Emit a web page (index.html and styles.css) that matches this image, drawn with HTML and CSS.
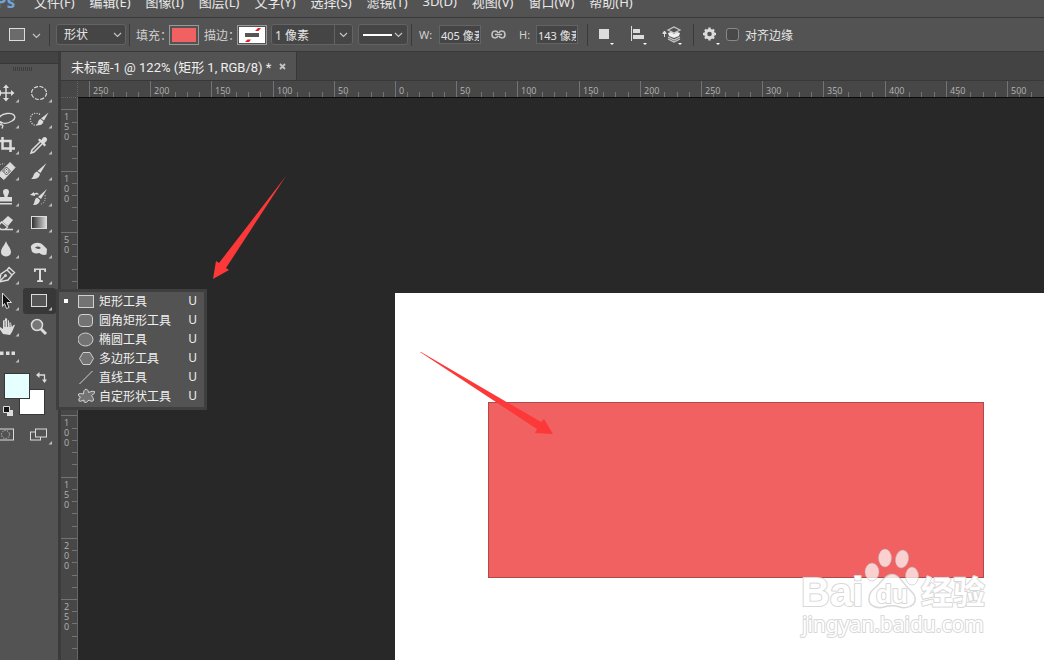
FILE: index.html
```html
<!DOCTYPE html>
<html lang="zh-CN">
  <head>
    <meta charset="utf-8">
    <title>未标题-1</title>
    <link rel="stylesheet" href="styles.css">
  </head>
  <body>
    <svg class="defs" width="0" height="0" aria-hidden="true">
      <defs>
        <path id="corner" d="M29 19v3.500h-3.500z" fill="#bdbdbd"/>
        <path id="chev" d="M1 1l3.500 3.500L8 1" fill="none" stroke="#c4c4c4" stroke-width="1.200"/>
        <linearGradient id="grad"><stop offset="0" stop-color="#2c2c2c"/><stop offset="1" stop-color="#ddd"/></linearGradient>
      </defs>
    </svg>

    <nav class="menubar">
      <span class="logo">Ps</span>
      <a href="#">文件(F)</a>
      <a href="#">编辑(E)</a>
      <a href="#">图像(I)</a>
      <a href="#">图层(L)</a>
      <a href="#">文字(Y)</a>
      <a href="#">选择(S)</a>
      <a href="#">滤镜(T)</a>
      <a href="#">3D(D)</a>
      <a href="#">视图(V)</a>
      <a href="#">窗口(W)</a>
      <a href="#">帮助(H)</a>
    </nav>

    <div class="options">
      <button class="icon current" aria-label="当前工具">
        <svg width="32" height="14"><rect x=".5" y=".5" width="15" height="12" fill="#6b6b6b" stroke="#dcdcdc"/><use href="#chev" x="23" y="5"/></svg>
      </button>
      <i class="sep"></i>
      <div class="drop mode">
        <select aria-label="模式"><option>形状</option></select>
        <svg width="9" height="6"><use href="#chev"/></svg>
      </div>
      <i class="sep"></i>
      <label class="lab" for="fill">填充：</label>
      <button id="fill" class="swatch"><span class="red"></span></button>
      <label class="lab" for="stroke">描边：</label>
      <button id="stroke" class="swatch">
        <svg width="26" height="16"><rect width="26" height="16" fill="#fff"/><rect x="6" y="6" width="14" height="4" fill="#555"/><path d="M6 15l2.500-2.500H12L10 15zM16 4l3-3h3l-2.500 3z" fill="#e02020"/></svg>
      </button>
      <div class="drop width">
        <input type="text" value="1 像素" aria-label="描边宽度">
        <svg width="9" height="6"><use href="#chev"/></svg>
      </div>
      <button class="drop line" aria-label="描边类型">
        <span></span>
        <svg width="9" height="6"><use href="#chev"/></svg>
      </button>
      <i class="sep"></i>
      <label class="dim" for="w">W:</label>
      <input id="w" class="num" type="text" value="405 像素">
      <button class="icon link" aria-label="链接宽高">
        <svg width="15" height="10" fill="none" stroke="#c8c8c8" stroke-width="1.500"><path d="M7 3C6 .500 1 0 1 4.500S6 8.500 7 6M8 3c1-2.500 6-3 6 1.500S9 8.500 8 6M4 4.500h7"/></svg>
      </button>
      <label class="dim" for="h">H:</label>
      <input id="h" class="num" type="text" value="143 像素">
      <i class="sep wide"></i>
      <button class="icon path" aria-label="路径操作">
        <svg width="16" height="20"><rect x="1" y="4" width="10" height="10" fill="#dcdcdc"/><path d="M12 18h4l-2 2z" fill="#fff"/></svg>
      </button>
      <button class="icon path" aria-label="路径对齐">
        <svg width="18" height="20"><path d="M2 1h1v15H2zM4 4h7v4H4zM4 10h11v4H4z" fill="#dcdcdc"/><path d="M14 18h4l-2 2z" fill="#fff"/></svg>
      </button>
      <button class="icon path" aria-label="路径排列">
        <svg width="20" height="20"><path d="M2.500 6v6M.500 8.500h4M2.500 6L1 8h3z" stroke="#dcdcdc" fill="#dcdcdc"/><path d="M6 5l6-3 6 3-6 3zM6 12l6 3 6-3M6 14l6 3 6-3" fill="none" stroke="#c8c8c8" stroke-width="1.200"/><path d="M6 8l3-1 3 2 3-2 3 1-1 3-5 2-5-2z" fill="#eee"/><path d="M16 18h4l-2 2z" fill="#fff"/></svg>
      </button>
      <i class="sep last"></i>
      <button class="icon gear" aria-label="设置">
        <svg width="18" height="20"><g transform="translate(7.500 9)"><circle r="3.800" fill="none" stroke="#dcdcdc" stroke-width="3"/><path d="M0-6.500v3M0 3.500v3M-6.500 0h3M3.500 0h3M-4.500-4.500l2 2M2.500 2.500l2 2M4.500-4.500l-2 2M-2.500 2.500l-2 2" stroke="#dcdcdc" stroke-width="2.400"/></g><path d="M14 18h4l-2 2z" fill="#fff"/></svg>
      </button>
      <input id="edges" class="tick" type="checkbox">
      <label for="edges">对齐边缘</label>
    </div>

    <div class="main">
      <aside class="side">
        <div class="side-head"></div>
        <div class="grip"></div>
        <div class="tools">
          <button aria-label="移动"><svg viewBox="0 0 33 26"><path d="M9 13h14M16 6v14" stroke="#dcdcdc" stroke-width="1.500"/><path d="M16 4.500l3 3.500h-6zM16 21.500l3-3.500h-6zM7.500 13l3.500-3v6zM24.500 13L21 10v6z" fill="#dcdcdc"/><use href="#corner"/></svg></button>
          <button aria-label="椭圆选框"><svg viewBox="0 0 33 26"><ellipse cx="16" cy="13" rx="7.500" ry="6.500" fill="none" stroke="#dcdcdc" stroke-width="1.200" stroke-dasharray="4 1.500"/><use href="#corner"/></svg></button>
          <button aria-label="套索"><svg viewBox="0 0 33 26"><path d="M12 17.500C6 14 9 8.500 17 7.500S27 12 22 15s-9 2.500-11 1-3 1.500-1 2.500 4-1 2 4" fill="none" stroke="#dcdcdc" stroke-width="1.400"/><use href="#corner"/></svg></button>
          <button aria-label="快速选择"><svg viewBox="0 0 33 26"><path d="M17 8.500C13 6 7.500 7 7.500 13s5 7 8 5.500" fill="none" stroke="#dcdcdc" stroke-width="1.200" stroke-dasharray="1.200 1.300"/><path d="M25.500 6.500l-4.500 8-3-2zM17.500 13l3 2.500c-1 4-4 4-7 3.500 2-2 1-4.500 4-6z" fill="#dcdcdc"/><use href="#corner"/></svg></button>
          <button aria-label="裁剪"><svg viewBox="0 0 33 26"><path d="M7 9h13.500v11M12.500 5v11.500H25" fill="none" stroke="#dcdcdc" stroke-width="2.500"/><use href="#corner"/></svg></button>
          <button aria-label="吸管"><svg viewBox="0 0 33 26"><path d="M17 10l-8 8-1 3 3-1 8-8" fill="none" stroke="#dcdcdc" stroke-width="1.500"/><path d="M15 8l1.500-1.500L18.500 8c2-4 4-3 5-2s1 3-2 5l1.500 2-1.500 1.500z" fill="#dcdcdc"/><use href="#corner"/></svg></button>
          <button aria-label="修复画笔"><svg viewBox="0 0 33 26"><path d="M20 4.500l5 5-11 12-6-5z" fill="#dcdcdc" stroke="#dcdcdc" stroke-linejoin="round"/><path d="M16.500 9l4 4-4 4-4-4z" fill="none" stroke="#555"/><path d="M16.500 11v1M16.500 14v1M14 13h1.500M17.500 13H19" stroke="#555"/><path d="M7 11q2-6 8-5" fill="none" stroke="#dcdcdc" stroke-dasharray="1 1.500"/><use href="#corner"/></svg></button>
          <button aria-label="画笔"><svg viewBox="0 0 33 26"><path d="M23.500 5l-6 10-3-2zM14 13.500l3 2.500c-1 5-5 5-9 5 3-2 2-6 6-7.500z" fill="#dcdcdc"/><use href="#corner"/></svg></button>
          <button aria-label="仿制图章"><svg viewBox="0 0 33 26"><path d="M13 8a3 3 0 0 1 6 0c0 2-1.500 3-1.500 5H22v4.500H10V13h4.500c0-2-1.500-3-1.500-5zM10 19h12v1.500H10z" fill="#dcdcdc"/><use href="#corner"/></svg></button>
          <button aria-label="历史记录画笔"><svg viewBox="0 0 33 26"><path d="M24 5l-6 10-3-2zM14 13.500l3 2.500c-1 5-5 5-7 5 2-2 1-6 4-7.500zM7 11l4-3v1.500c2-1 4-1 5 1H12V12z" fill="#dcdcdc"/><path d="M22 11q1 8-4 9" fill="none" stroke="#dcdcdc" stroke-dasharray="1 1.500"/><use href="#corner"/></svg></button>
          <button aria-label="橡皮擦"><svg viewBox="0 0 33 26"><path d="M18 6l5 4-5 6-6-4.500z" fill="#dcdcdc"/><path d="M11.500 12l6 5-2.500 2.500h-4L8 16.500zM11 19.500h12" fill="none" stroke="#dcdcdc" stroke-width="1.400"/><use href="#corner"/></svg></button>
          <button aria-label="渐变"><svg viewBox="0 0 33 26"><rect x="8.500" y="6.500" width="15" height="12" fill="url(#grad)" stroke="#dcdcdc"/><use href="#corner"/></svg></button>
          <button aria-label="模糊"><svg viewBox="0 0 33 26"><path d="M16 5c1 4 5 7 5 11 0 6-10 6-10 0 0-4 4-7 5-11z" fill="#dcdcdc"/><use href="#corner"/></svg></button>
          <button aria-label="减淡"><svg viewBox="0 0 33 26"><path d="M8 10c3-4 9-4 12-1l4 4-.5 5.500c-3 1-6 0-7-1.500-4 1-8 0-8-3 0-1-1-3-.5-4z" fill="#dcdcdc"/><path d="M12 11.500q3-2 6 .5-3 2-6-.5z" fill="#555"/><use href="#corner"/></svg></button>
          <button aria-label="钢笔"><svg viewBox="0 0 33 26"><path d="M9 20l2-8 6-4 5 5-4 5zM9 20l6-6M17 8l2-2.500 5.500 5L22 13" fill="none" stroke="#dcdcdc" stroke-width="1.400"/><circle cx="15.500" cy="13.500" r="1.500" fill="#dcdcdc"/><use href="#corner"/></svg></button>
          <button aria-label="文字"><svg viewBox="0 0 33 26"><path d="M11 6.500h12V10h-1.500L21 8h-3v10l2 .500V20h-6v-1.500l2-.500V8h-3l-.500 2H11z" fill="#dcdcdc"/><use href="#corner"/></svg></button>
          <button aria-label="路径选择"><svg viewBox="0 0 33 26"><path d="M12.500 5l9 9.500h-4.500l2 5-2.500 1-2-5-2 3z" fill="#111" stroke="#dcdcdc"/><use href="#corner"/></svg></button>
          <button class="on" aria-label="矩形"><svg viewBox="0 0 33 26"><rect x="8.500" y="6.500" width="15" height="12" fill="#555" stroke="#dcdcdc"/><use href="#corner"/></svg></button>
          <button aria-label="抓手"><svg viewBox="0 0 33 26"><path d="M13 20l-4-6q-1-2 1-1l3 2V7q1-2 2 0V5q1-2 2 0v1q1-1 2 1v2q2-2 2 0l1 4q2-3 3-2l-3 7-2 3z" fill="#dcdcdc"/><path d="M15 7v6M17.500 6v7M20 8v5" stroke="#535353" stroke-width=".8"/><use href="#corner"/></svg></button>
          <button aria-label="缩放"><svg viewBox="0 0 33 26"><circle cx="14" cy="11" r="5.500" fill="#777" stroke="#dcdcdc" stroke-width="1.500"/><path d="M18 15l5 5" stroke="#dcdcdc" stroke-width="3"/></svg></button>
          <button aria-label="更多"><svg viewBox="0 0 33 26"><path d="M10 11.500h3.500V15H10zM16 11.500h3.500V15H16zM21.500 11.500H25V15h-3.500z" fill="#dcdcdc"/><use href="#corner"/></svg></button>
        </div>
        <div class="colors">
          <button class="bg" aria-label="背景色"></button>
          <button class="fg" aria-label="前景色"></button>
          <button class="swap" aria-label="切换颜色"><svg width="11" height="11"><path d="M2 3h6.500v6" fill="none" stroke="#dcdcdc" stroke-width="1.300"/><path d="M0 3l3.500-3v6zM8.500 11L6 7.500h5z" fill="#dcdcdc"/></svg></button>
          <button class="reset" aria-label="默认颜色"><svg width="11" height="11"><path d="M4 4h6v6H4z" fill="#dcdcdc"/><path d="M.500.500h6v6h-6z" fill="#111" stroke="#dcdcdc"/></svg></button>
        </div>
        <div class="tools">
          <button aria-label="快速蒙版"><svg viewBox="0 0 33 26"><rect x="9.500" y="7" width="14" height="11" fill="none" stroke="#dcdcdc"/><circle cx="15.500" cy="12.500" r="4" fill="none" stroke="#dcdcdc" stroke-dasharray="1 1.500"/></svg></button>
          <button aria-label="屏幕模式"><svg viewBox="0 0 33 26"><rect x="7.500" y="10" width="10" height="8" fill="#535353" stroke="#dcdcdc"/><rect x="12.500" y="7" width="11" height="8" fill="#535353" stroke="#dcdcdc"/><use href="#corner"/></svg></button>
        </div>
      </aside>

      <section class="doc">
        <div class="tabs">
          <div class="tab"><span>未标题-1 @ 122% (矩形 1, RGB/8) *</span><button aria-label="关闭"><svg width="7" height="7"><path d="M1 1l5 5M6 1L1 6" stroke="#c4c4c4" stroke-width="1.800"/></svg></button></div>
        </div>
        <div class="frame">
          <div class="zero"></div>
          <svg id="hruler" class="ruler"></svg>
          <svg id="vruler" class="ruler"></svg>
          <div class="stage">
            <div class="page"><div class="shape"></div></div>
            <svg class="arrow one" width="76" height="104"><path d="M74 0L7 87 4 85 1 103 17 94 14 92z" fill="#fd3838"/></svg>
            <svg class="arrow two" width="134" height="84"><path d="M0 0L1 0 121 70 124 67 133 82 115 81 117 77z" fill="#fd3838"/></svg>
            <svg class="mark" width="200" height="96">
              <g fill="#fff" fill-opacity=".7" stroke="#b4b4b4" stroke-opacity=".5">
                <ellipse cx="77" cy="26" rx="7" ry="9"/><ellipse cx="90" cy="12" rx="6.500" ry="9"/><ellipse cx="107" cy="13" rx="6.500" ry="9" transform="rotate(12 107 13)"/><ellipse cx="117" cy="30" rx="6.500" ry="9"/>
                <path d="M97 28c7 0 10 8 16 14s8 8 7 13-9 8-15 6-10-2-16 0-15-1-15-7 1-8 7-13 9-13 16-13z" fill-opacity=".8" stroke-width="1.500"/>
              </g>
              <g class="mark-text">
                <text x="6" y="60" class="bai">Bai</text>
                <text x="81" y="57" class="du">du</text>
                <text x="126" y="58" class="jy">经验</text>
                <text x="7" y="86" class="url">jingyan.baidu.com</text>
              </g>
            </svg>
          </div>
        </div>
      </section>

      <ul class="flyout">
        <li><button><i class="dot"></i><svg width="18" height="16"><rect x=".5" y="2.500" width="15" height="12"/></svg><span>矩形工具</span><b>U</b></button></li>
        <li><button><i></i><svg width="18" height="16"><rect x=".5" y="2.500" width="14" height="12" rx="3.500"/></svg><span>圆角矩形工具</span><b>U</b></button></li>
        <li><button><i></i><svg width="18" height="16"><ellipse cx="7.500" cy="8.500" rx="7.500" ry="6.500"/></svg><span>椭圆工具</span><b>U</b></button></li>
        <li><button><i></i><svg width="18" height="16"><path d="M5 2.500h7l3.500 6-3.500 6H5l-3.500-6z"/></svg><span>多边形工具</span><b>U</b></button></li>
        <li><button><i></i><svg width="18" height="16"><path d="M1.500 15L14.500 2"/></svg><span>直线工具</span><b>U</b></button></li>
        <li><button><i></i><svg width="18" height="16"><path d="M7 1.500q3-1 3.500 3 4-2 6-1 1 2-3 4 3 4 1.500 5.500-2 1-4-1-3 4-5 2v-2q-4 2-5 1-1-2 1.500-4-3-1-2-3 2-1 5 0 0-4 1.500-4.500z"/></svg><span>自定形状工具</span><b>U</b></button></li>
      </ul>
    </div>

    <script>
      const ns = 'http://www.w3.org/2000/svg';
      const step = 61.2; // px for 50 units at 122%

      function add(svg, tag, attrs, text) {
        const el = document.createElementNS(ns, tag);
        for (const k in attrs) el.setAttribute(k, attrs[k]);
        if (text) el.textContent = text;
        svg.appendChild(el);
      }

      function drawRuler(svg, origin, vertical) {
        const len = vertical ? svg.clientHeight : svg.clientWidth;
        svg.innerHTML = '';
        for (let i = Math.ceil(-origin / step * 5); origin + i * step / 5 < len; i++) {
          const p = Math.round(origin + i * step / 5);
          const major = i % 5 === 0;
          const size = major ? 16 : 5;
          add(svg, 'rect', vertical
            ? {x: 16 - size, y: p, width: size, height: 1}
            : {x: p, y: 16 - size, width: 1, height: size});
          if (!major) continue;
          const label = String(Math.abs(i * 10));
          if (vertical) {
            label.split('').forEach((c, n) => add(svg, 'text', {x: 3, y: p + 11 + n * 10}, c));
          } else {
            add(svg, 'text', {x: p + 4, y: 13}, label);
          }
        }
      }

      function draw() {
        drawRuler(document.getElementById('hruler'), 317, false);
        drawRuler(document.getElementById('vruler'), 195, true);
      }
      draw();
      window.addEventListener('resize', draw);
    </script>
  </body>
</html>
```
FILE: styles.css
```css
* { box-sizing: border-box; }
html, body { height: 100%; }
body { margin: 0; display: flex; flex-direction: column; overflow: hidden; background: #535353; color: #e6e6e6; font: 12px "Noto Sans", "Noto Sans CJK SC", sans-serif; }
button { border: 0; padding: 0; background: none; color: inherit; font: inherit; display: flex; align-items: center; }
input, select { color: inherit; font: inherit; margin: 0; }
svg { display: block; flex-shrink: 0; }
.defs { position: absolute; }

.menubar { flex: none; display: flex; align-items: center; gap: 15px; height: 32px; margin-top: -15px; font-size: 13px; }
.menubar a { color: #e8e8e8; text-decoration: none; white-space: nowrap; }
.logo { width: 23px; margin-left: -4px; color: #6ea2d8; font: bold 17px "Open Sans", sans-serif; }

.options { flex: none; display: flex; align-items: center; height: 35px; border-top: 1px solid #383838; border-bottom: 1px solid #383838; white-space: nowrap; }
.sep { width: 1px; height: 22px; background: #3a3a3a; margin: 0 6px 0 3px; }
.sep.wide { margin: 0 10px 0 9px; }
.sep.last { margin: 0 8px 0 -4px; }
.current { margin: 0 5px 0 9px; }
.drop { display: flex; align-items: center; height: 21px; background: #454545; border: 1px solid #636363; border-radius: 3px; padding: 0 3px 0 7px; }
.drop select, .drop input { appearance: none; flex: 1; min-width: 0; height: 19px; padding: 0; border: 0; background: none; outline: none; }
.mode { width: 70px; }
.width { width: 82px; margin: 0 5px 0 4px; padding-left: 3px; }
.width svg { width: 15px; height: 19px; padding: 7px 0 0 4px; border-left: 1px solid #636363; }
.line { width: 50px; padding: 0 4px; justify-content: space-between; }
.line span { width: 29px; height: 2px; background: #fff; }
.lab { width: 33px; overflow: hidden; color: #d0d0d0; }
.swatch { width: 30px; height: 20px; border: 1px solid #999; justify-content: center; margin-right: 5px; }
#stroke { margin-right: 0; }
.red { width: 24px; height: 14px; background: #f16161; }
.dim { width: 20px; margin-left: 1px; color: #d0d0d0; font-size: 11px; }
.num { width: 42px; height: 19px; padding: 0 1px; background: #454545; border: 1px solid #636363; font-size: 11px; }
.link { margin: 0 12px 0 10px; }
#h { margin-left: -3px; }
.path { margin-right: 15px; }
.gear { margin-right: 6px; }
.tick { appearance: none; width: 13px; height: 13px; margin-right: 6px; background: #484848; border: 1px solid #888; border-radius: 3px; }

.main { position: relative; flex: 1; min-height: 0; display: flex; }
.side { flex: none; width: 61px; border-right: 3px solid #3b3b3b; overflow: hidden; }
.side-head { height: 12px; background: #434343; border-bottom: 1px solid #383838; }
.grip { width: 20px; height: 4px; margin: 3px 0 9px 13px; background: repeating-linear-gradient(90deg, #3d3d3d 0 1px, #535353 1px 2px); }
.tools { display: grid; grid-template-columns: 33px 33px; grid-auto-rows: 26px; margin-left: -10px; }
.tools button svg { width: 33px; height: 26px; }
.tools .on { background: #383838; border-radius: 3px; }
.colors { position: relative; height: 56px; }
.colors button { position: absolute; }
.fg, .bg { width: 26px; height: 26px; border: 1px solid #383838; }
.colors .fg { left: 4px; top: 7px; background: #e6ffff; border: 1px solid #383838; }
.colors .bg { left: 19px; top: 23px; background: #fff; border: 1px solid #383838; }
.swap { left: 36px; top: 6px; }
.reset { left: 3px; top: 40px; }

.doc { flex: 1; min-width: 0; display: flex; flex-direction: column; }
.tabs { flex: none; height: 29px; background: #434343; border-bottom: 1px solid #383838; display: flex; }
.tab { display: flex; align-items: center; gap: 8px; padding: 0 10px; background: #535353; border-right: 1px solid #383838; font: 13px Roboto, "Noto Sans CJK SC", sans-serif; white-space: nowrap; color: #eee; }
.frame { flex: 1; min-height: 0; display: grid; grid-template: 17px 1fr / 17px 1fr; background: #474747; }
.zero { border-right: 1px dotted #666; border-bottom: 1px dotted #666; }
.ruler { width: 100%; height: 100%; background: #474747; fill: #737373; font: 9px "Open Sans", sans-serif; }
.ruler text { fill: #b4b4b4; }
#hruler { border-bottom: 1px solid #0c0c0c; }
#vruler { border-right: 1px solid #666; }
.stage { position: relative; overflow: hidden; background: #282828; }
.page { position: absolute; left: 317px; top: 195px; right: 0; bottom: 0; background: #fff; }
.shape { position: absolute; left: 93px; top: 109px; width: 496px; height: 176px; background: #f16161; border: 1px solid #b04a4a; }
.arrow { position: absolute; }
.one { left: 134px; top: 78px; }
.two { left: 342px; top: 254px; }

.mark { position: absolute; left: 717px; top: 448px; }
.mark-text { fill: #fff; stroke: #d8d8d8; stroke-width: 2px; paint-order: stroke; stroke-linejoin: round; font-family: "Liberation Sans", "Noto Sans CJK SC", sans-serif; font-weight: bold; }
.bai { font-size: 40px; }
.du { font-size: 26px; }
.jy { font-size: 32px; }
.url { font: 21px "Noto Sans", sans-serif; }

.flyout { position: absolute; left: 56px; top: 237px; width: 151px; margin: 0; padding: 0 0 1px; border: 3px solid #3f3f3f; background: #535353; list-style: none; }
.flyout button { width: 100%; height: 19px; padding: 0 0 2px 5px; color: #f0f0f0; }
.flyout i { width: 4px; height: 4px; margin-right: 10px; }
.flyout .dot { background: #fff; }
.flyout svg { margin-right: 3px; fill: #737373; stroke: #d0d0d0; }
.flyout b { margin: 0 7px 0 auto; font-weight: normal; }
```
